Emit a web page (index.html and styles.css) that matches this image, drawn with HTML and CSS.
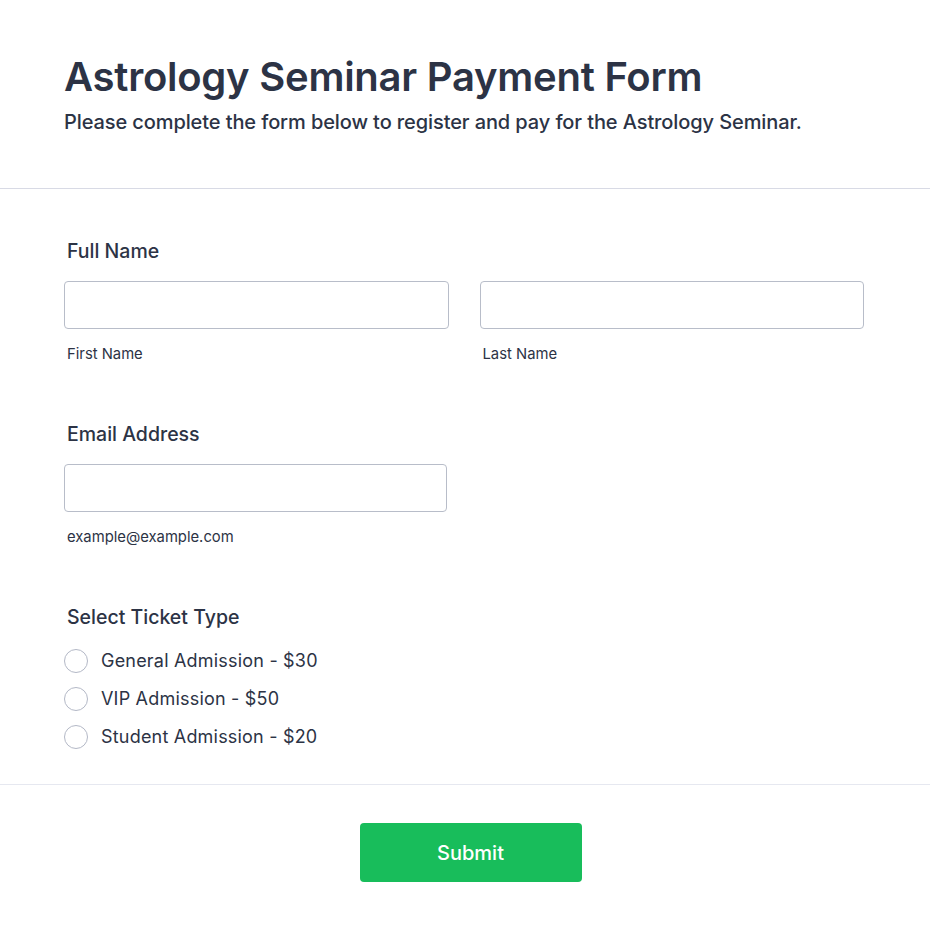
FILE: index.html
```html
<!DOCTYPE html>
<html lang="en">
<head>
  <meta charset="UTF-8">
  <title>Astrology Seminar Payment Form</title>
  <link rel="stylesheet" href="styles.css">
</head>
<body>
  <header class="form-header">
    <h1>Astrology Seminar Payment Form</h1>
    <p class="subtitle">Please complete the form below to register and pay for the Astrology Seminar.</p>
  </header>

  <form class="form-body">
    <div class="field">
      <label class="field-label">Full Name</label>
      <div class="name-row">
        <div class="sub-field">
          <input type="text" class="text-input">
          <span class="sublabel">First Name</span>
        </div>
        <div class="sub-field">
          <input type="text" class="text-input">
          <span class="sublabel">Last Name</span>
        </div>
      </div>
    </div>

    <div class="field">
      <label class="field-label">Email Address</label>
      <div class="sub-field email">
        <input type="email" class="text-input">
        <span class="sublabel">example@example.com</span>
      </div>
    </div>

    <div class="field">
      <label class="field-label">Select Ticket Type</label>
      <div class="radio-list">
        <label class="radio-row"><span class="radio"></span>General Admission - $30</label>
        <label class="radio-row"><span class="radio"></span>VIP Admission - $50</label>
        <label class="radio-row"><span class="radio"></span>Student Admission - $20</label>
      </div>
    </div>
  </form>

  <div class="form-footer">
    <button type="button" class="submit-btn">Submit</button>
  </div>
</body>
</html>
```

FILE: styles.css
```css
body {
  margin: 0;
  background: #fff;
  font-family: Inter, "Noto Sans", sans-serif;
  color: #2c3345;
}
.form-header {
  padding: 53px 66px 54px 64px;
  border-bottom: 1px solid #d8dae5;
}
.form-header h1 {
  margin: 0;
  font-size: 40px;
  line-height: 48px;
  font-weight: 600;
  letter-spacing: -0.25px;
}
.subtitle {
  margin: 9px 0 0;
  font-size: 20px;
  line-height: 24px;
  font-weight: 500;
  letter-spacing: -0.1px;
}
.form-body {
  padding: 50px 66px 35px 64px;
  display: flex;
  flex-direction: column;
  gap: 59px;
  border-bottom: 1px solid #e6e8f0;
}
.field {
  display: flex;
  flex-direction: column;
}
.field-label {
  font-size: 19.5px;
  line-height: 24px;
  font-weight: 500;
  padding-left: 3px;
  margin-bottom: 18px;
}
.name-row {
  display: flex;
  gap: 31px;
}
.sub-field {
  flex: 1;
  display: flex;
  flex-direction: column;
}
.sub-field.email {
  width: 383px;
  flex: none;
}
.text-input {
  box-sizing: border-box;
  height: 48px;
  width: 100%;
  border: 1px solid #b8bdc9;
  border-radius: 4px;
  margin: 0;
  font: inherit;
}
.sublabel {
  margin-top: 16px;
  padding-left: 3px;
  font-size: 14.8px;
  line-height: 18px;
  color: #2c3345;
}
.radio-list {
  display: flex;
  flex-direction: column;
  gap: 14px;
  margin-top: 2px;
}
.radio-row {
  display: flex;
  align-items: center;
  gap: 13px;
  font-size: 18px;
  line-height: 24px;
  letter-spacing: 0.2px;
  color: #2c3345;
}
.radio {
  box-sizing: border-box;
  width: 24px;
  height: 24px;
  border: 1px solid #b3b8c6;
  border-radius: 50%;
  background: #fff;
}
.form-footer {
  display: flex;
  justify-content: center;
  padding: 38px 0 50px 11px;
}
.submit-btn {
  width: 222px;
  height: 59px;
  border: none;
  border-radius: 4px;
  background: #18bd5b;
  color: #fff;
  font-family: Inter, "Noto Sans", sans-serif;
  font-size: 20px;
  font-weight: 500;
}
```
